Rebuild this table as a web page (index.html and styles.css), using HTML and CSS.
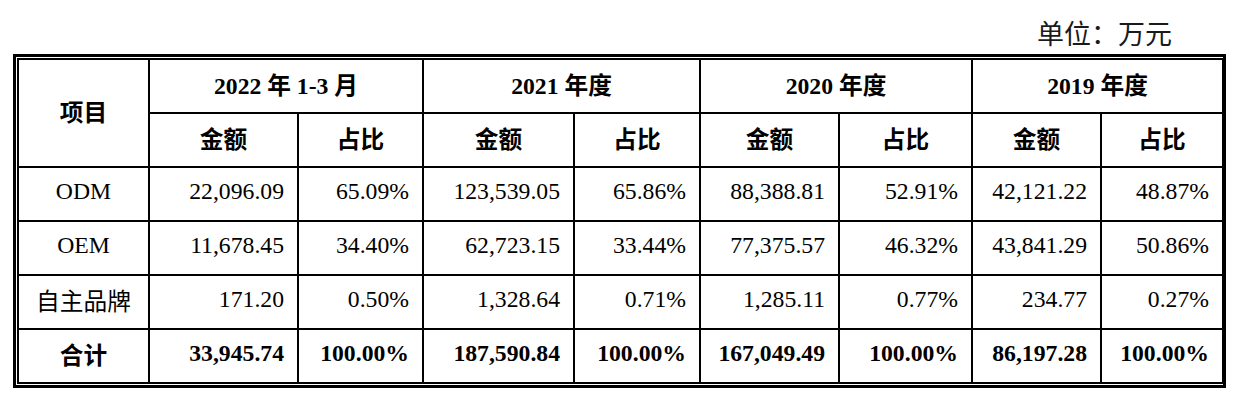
FILE: index.html
```html
<!DOCTYPE html>
<html lang="zh-CN">
<head>
<meta charset="utf-8">
<link rel="stylesheet" href="styles.css">
</head>
<body>
<div class="page">
  <div class="unit">单位：万元</div>
  <div class="frame">
    <table class="data">
      <colgroup>
        <col class="c-item">
        <col class="c-a1"><col class="c-p1">
        <col class="c-a2"><col class="c-p2">
        <col class="c-a3"><col class="c-p3">
        <col class="c-a4"><col class="c-p4">
      </colgroup>
      <thead>
        <tr>
          <th rowspan="2">项目</th>
          <th colspan="2">2022 年 1-3 月</th>
          <th colspan="2">2021 年度</th>
          <th colspan="2">2020 年度</th>
          <th colspan="2">2019 年度</th>
        </tr>
        <tr>
          <th>金额</th><th>占比</th>
          <th>金额</th><th>占比</th>
          <th>金额</th><th>占比</th>
          <th>金额</th><th>占比</th>
        </tr>
      </thead>
      <tbody>
        <tr>
          <td class="label">ODM</td>
          <td>22,096.09</td><td>65.09%</td>
          <td>123,539.05</td><td>65.86%</td>
          <td>88,388.81</td><td>52.91%</td>
          <td>42,121.22</td><td>48.87%</td>
        </tr>
        <tr>
          <td class="label">OEM</td>
          <td>11,678.45</td><td>34.40%</td>
          <td>62,723.15</td><td>33.44%</td>
          <td>77,375.57</td><td>46.32%</td>
          <td>43,841.29</td><td>50.86%</td>
        </tr>
        <tr>
          <td class="label">自主品牌</td>
          <td>171.20</td><td>0.50%</td>
          <td>1,328.64</td><td>0.71%</td>
          <td>1,285.11</td><td>0.77%</td>
          <td>234.77</td><td>0.27%</td>
        </tr>
        <tr class="total">
          <td class="label">合计</td>
          <td>33,945.74</td><td>100.00%</td>
          <td>187,590.84</td><td>100.00%</td>
          <td>167,049.49</td><td>100.00%</td>
          <td>86,197.28</td><td>100.00%</td>
        </tr>
      </tbody>
    </table>
  </div>
</div>
</body>
</html>
```

FILE: styles.css
```css
html, body {
  margin: 0;
  padding: 0;
  background: #fff;
}

body {
  font-family: "Liberation Serif", "Noto Sans CJK SC", serif;
  color: #000;
}

.page {
  width: 1238px;
  height: 400px;
  padding-top: 16px;
  box-sizing: border-box;
}

.unit {
  font-family: "Noto Sans CJK SC", sans-serif;
  font-size: 27px;
  line-height: 34px;
  text-align: right;
  padding-right: 66px;
  color: #1a1a1a;
  font-weight: 400;
}

.frame {
  margin-left: 13px;
  width: 1213px;
  box-sizing: border-box;
  border: 3px solid #000;
  padding: 1px;
  margin-top: 4px;
}

.data {
  width: 100%;
  border-collapse: collapse;
  table-layout: fixed;
  font-size: 23.7px;
}

.c-item { width: 131px; }
.c-a1 { width: 149px; }
.c-p1 { width: 125px; }
.c-a2 { width: 151px; }
.c-p2 { width: 126px; }
.c-a3 { width: 139px; }
.c-p3 { width: 133px; }
.c-a4 { width: 129px; }
.c-p4 { width: 122px; }

.data th,
.data td {
  border: 2px solid #000;
  height: 47px;
  padding: 0 13px 5px 0;
  vertical-align: middle;
  white-space: nowrap;
}

.data th {
  font-weight: 700;
  text-align: center;
  padding: 0 0 5px 0;
}

.data td {
  text-align: right;
  font-weight: 400;
}

.data td.label {
  text-align: center;
  padding: 0 0 5px 0;
}

.data tr.total td {
  font-weight: 700;
}
```
